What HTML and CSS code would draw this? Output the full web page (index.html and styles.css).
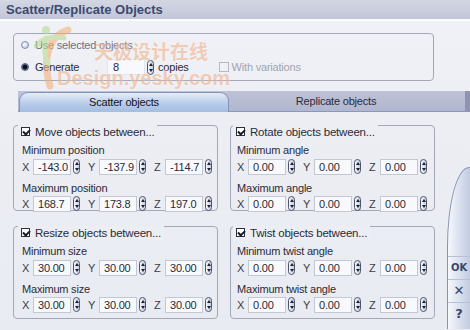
FILE: index.html
```html
<!DOCTYPE html>
<html lang="en">
<head>
    <meta charset="UTF-8">
    <title>Scatter/Replicate Objects</title>
    <link rel="stylesheet" href="styles.css">
</head>
<body>
    <div class="window">
        <div class="titlebar">Scatter/Replicate Objects</div>

        <div class="source">
            <div class="source-box">
                <div class="opt disabled">
                    <span class="radio"></span>Use selected objects
                </div>
                <div class="opt">
                    <span class="radio on"></span>
                    <span class="gen-label">Generate</span>
                    <span class="field count">8</span>
                    <span class="spin"></span>
                    <span class="copies">copies</span>
                    <span class="box-off"></span>
                    <span class="muted">With variations</span>
                </div>
            </div>
        </div>

        <!-- watermark from the source picture -->
        <div class="watermark">
            <svg class="wm-logo" width="50" height="70" viewBox="0 0 50 70">
                <path d="M34 6 C14 12 8 36 16 62" fill="none" stroke="#f3b27a" stroke-width="7" stroke-linecap="round"/>
                <circle cx="12" cy="6" r="4" fill="#b9dc8c"/>
                <path d="M2 22 C8 14 20 12 30 14 M12 14 C10 24 10 32 14 40" fill="none" stroke="#b9dc8c" stroke-width="5" stroke-linecap="round"/>
            </svg>
            <div class="wm-cn">天极设计在线</div>
            <div class="wm-en">Design.yesky.com</div>
        </div>

        <div class="tabs">
            <div class="tab active">Scatter objects</div>
            <div class="tab">Replicate objects</div>
        </div>

        <div class="main">
            <div class="groups">
                <div class="group">
                    <div class="group-title"><span class="tick"></span>Move objects between...</div>
                    <div class="row-label">Minimum position</div>
                    <div class="xyz">
                        <span class="axis">X</span><span class="field">-143.0</span><span class="spin"></span>
                        <span class="axis">Y</span><span class="field">-137.9</span><span class="spin"></span>
                        <span class="axis">Z</span><span class="field">-114.7</span><span class="spin"></span>
                    </div>
                    <div class="row-label">Maximum position</div>
                    <div class="xyz">
                        <span class="axis">X</span><span class="field">168.7</span><span class="spin"></span>
                        <span class="axis">Y</span><span class="field">173.8</span><span class="spin"></span>
                        <span class="axis">Z</span><span class="field">197.0</span><span class="spin"></span>
                    </div>
                </div>

                <div class="group right">
                    <div class="group-title"><span class="tick"></span>Rotate objects between...</div>
                    <div class="row-label">Minimum angle</div>
                    <div class="xyz">
                        <span class="axis">X</span><span class="field">0.00</span><span class="spin"></span>
                        <span class="axis">Y</span><span class="field">0.00</span><span class="spin"></span>
                        <span class="axis">Z</span><span class="field">0.00</span><span class="spin"></span>
                    </div>
                    <div class="row-label">Maximum angle</div>
                    <div class="xyz">
                        <span class="axis">X</span><span class="field">0.00</span><span class="spin"></span>
                        <span class="axis">Y</span><span class="field">0.00</span><span class="spin"></span>
                        <span class="axis">Z</span><span class="field">0.00</span><span class="spin"></span>
                    </div>
                </div>

                <div class="group">
                    <div class="group-title"><span class="tick"></span>Resize objects between...</div>
                    <div class="row-label">Minimum size</div>
                    <div class="xyz">
                        <span class="axis">X</span><span class="field">30.00</span><span class="spin"></span>
                        <span class="axis">Y</span><span class="field">30.00</span><span class="spin"></span>
                        <span class="axis">Z</span><span class="field">30.00</span><span class="spin"></span>
                    </div>
                    <div class="row-label">Maximum size</div>
                    <div class="xyz">
                        <span class="axis">X</span><span class="field">30.00</span><span class="spin"></span>
                        <span class="axis">Y</span><span class="field">30.00</span><span class="spin"></span>
                        <span class="axis">Z</span><span class="field">30.00</span><span class="spin"></span>
                    </div>
                </div>

                <div class="group right">
                    <div class="group-title"><span class="tick"></span>Twist objects between...</div>
                    <div class="row-label">Minimum twist angle</div>
                    <div class="xyz">
                        <span class="axis">X</span><span class="field">0.00</span><span class="spin"></span>
                        <span class="axis">Y</span><span class="field">0.00</span><span class="spin"></span>
                        <span class="axis">Z</span><span class="field">0.00</span><span class="spin"></span>
                    </div>
                    <div class="row-label">Maximum twist angle</div>
                    <div class="xyz">
                        <span class="axis">X</span><span class="field">0.00</span><span class="spin"></span>
                        <span class="axis">Y</span><span class="field">0.00</span><span class="spin"></span>
                        <span class="axis">Z</span><span class="field">0.00</span><span class="spin"></span>
                    </div>
                </div>
            </div>

            <div class="side">
                <div class="side-shape">
                    <div class="side-btn">OK</div>
                    <div class="side-btn big">&#x2715;</div>
                    <div class="side-btn big">?</div>
                </div>
            </div>
        </div>
    </div>
</body>
</html>
```

FILE: styles.css
```css
body {
    margin: 0;
    font-family: 'Liberation Sans', Arial, sans-serif;
    font-size: 11px;
    color: #2b2b36;
    background-color: #eceef4;
}

.window {
    position: relative;
    width: 470px;
    height: 330px;
    overflow: hidden;
    background: linear-gradient(#f1f2f7, #eceef4 40%, #e9ebf2);
}

.titlebar {
    height: 19px;
    line-height: 19px;
    padding-left: 6px;
    font-size: 13px;
    font-weight: bold;
    color: #3b4a6e;
    background: linear-gradient(#d3d6e3, #c2c6d9);
    border-bottom: 2px solid #fafbfd;
}

/* top source box */
.source {
    padding: 12px 0 10px 13px;
}

.source-box {
    width: 412px;
    height: 38px;
    padding: 4px 0 4px 7px;
    border: 1px solid #a3a7b8;
    border-radius: 4px;
}

.opt {
    display: flex;
    align-items: center;
    height: 14px;
    letter-spacing: -0.2px;
}

.opt + .opt {
    height: 18px;
    margin-top: 6px;
}

.opt.disabled {
    color: #6c7080;
}

.radio {
    width: 8px;
    height: 8px;
    margin-right: 6px;
    border-radius: 50%;
    border: 1px solid #7e90b6;
    background: radial-gradient(circle at 40% 40%, #ffffff, #a9bde0);
    box-sizing: border-box;
}

.radio.on {
    border-color: #4d5f86;
    background: radial-gradient(circle, #111 0 2px, #7d93c2 3px);
}

.gen-label {
    width: 72px;
}

.field {
    display: flex;
    align-items: center;
    width: 38px;
    height: 16px;
    padding-left: 4px;
    box-sizing: border-box;
    background-color: #f8f9fc;
    border: 1px solid #c4c8d5;
    color: #2a2a34;
}

.field.count {
    padding-left: 5px;
    border-color: #e3e5ec;
}

.spin {
    display: flex;
    flex-direction: column;
    justify-content: space-between;
    align-items: center;
    width: 7px;
    height: 15px;
    margin-left: 2px;
    padding: 2px 0;
    box-sizing: border-box;
    border: 1px solid #4e5569;
    border-radius: 4px;
    background: linear-gradient(90deg, #f5f7fc, #c6cde0);
}

.spin::before,
.spin::after {
    content: '';
    border-left: 2px solid transparent;
    border-right: 2px solid transparent;
}

.spin::before {
    border-bottom: 3px solid #1e2230;
}

.spin::after {
    border-top: 3px solid #1e2230;
}

.copies {
    margin-left: 4px;
}

.box-off {
    width: 10px;
    height: 10px;
    margin-left: 30px;
    margin-right: 3px;
    box-sizing: border-box;
    border: 1px solid #b5b9c6;
    background-color: #f0f1f5;
}

.muted {
    color: #a0a4b2;
}

/* watermark */
.watermark {
    position: absolute;
    left: 32px;
    top: 22px;
    width: 210px;
    height: 70px;
    opacity: 0.6;
    pointer-events: none;
}

.wm-logo {
    position: absolute;
    left: 2px;
    top: 2px;
}

.wm-cn {
    position: absolute;
    left: 62px;
    top: 17px;
    font-family: 'Noto Sans CJK SC', sans-serif;
    font-size: 19px;
    font-weight: bold;
    line-height: 23px;
    color: #f0b48c;
    text-shadow: 0 0 2px #fff;
}

.wm-en {
    position: absolute;
    left: 25px;
    top: 44px;
    font-size: 20px;
    font-weight: bold;
    line-height: 24px;
    color: #f0b48c;
    text-shadow: 0 0 2px #fff;
}

/* tabs */
.tabs {
    display: flex;
    height: 20px;
    margin-left: 18px;
    background: linear-gradient(#bec2d7, #b2b7cf);
    border-right: 5px solid #8d93b1;
    border-bottom: 1px solid #7f9bcb;
}

.tab {
    width: 214px;
    line-height: 20px;
    text-align: center;
    letter-spacing: -0.2px;
    color: #2a2c3c;
}

.tab.active {
    width: 208px;
    height: 19px;
    margin: 1px 0 0 1px;
    line-height: 19px;
    background: linear-gradient(#e6edf8, #b8cce9 55%, #a4bde2);
    border: 1px solid #8393ba;
    border-bottom: none;
    border-radius: 9px 9px 0 0;
    color: #121218;
}

/* lower area */
.main {
    display: flex;
    height: 217px;
}

.groups {
    display: grid;
    grid-template-columns: 205px 205px;
    grid-template-rows: 86px 93px;
    column-gap: 12px;
    row-gap: 15px;
    padding: 13px 0 0 13px;
}

.group {
    padding-left: 8px;
    border: 1px solid #a3a7b8;
    border-radius: 4px;
    letter-spacing: -0.2px;
}

.group.right {
    padding-left: 6px;
}

.group-title {
    display: inline-flex;
    align-items: center;
    height: 14px;
    margin: -8px 0 0 -4px;
    padding: 0 3px;
    background-color: #eceef4;
    font-size: 11.5px;
}

.tick {
    width: 9px;
    height: 9px;
    margin-right: 5px;
    box-sizing: border-box;
    border: 1px solid #2c2f3c;
    background: #fff;
}

.tick::after {
    content: '';
    display: block;
    width: 3px;
    height: 5px;
    margin: 0 0 0 2px;
    border-right: 2px solid #1a1d28;
    border-bottom: 2px solid #1a1d28;
    transform: rotate(45deg);
}

.row-label {
    height: 14px;
    line-height: 14px;
    margin-top: 4px;
}

.xyz + .row-label {
    margin-top: 6px;
}

.xyz {
    display: flex;
    align-items: center;
    height: 16px;
    margin-top: 2px;
}

.xyz + .row-label + .xyz {
    margin-top: 1px;
}

.axis {
    width: 7px;
    margin-right: 4px;
    color: #3a3c48;
}

.xyz .spin + .axis {
    margin-left: 8px;
}

/* right button strip */
.side {
    display: flex;
    flex: 1;
    padding-left: 12px;
}

.side-shape {
    display: flex;
    flex-direction: column;
    justify-content: flex-end;
    flex: 1;
    margin-top: 55px;
    padding-bottom: 4px;
    border-left: 1px solid #8a92b2;
    border-top: 1px solid #8a92b2;
    border-top-left-radius: 22px 80px;
    background: linear-gradient(90deg, #f6f8fc, #d5dcec 60%, #c3cbe0);
}

.side-btn {
    height: 22px;
    line-height: 22px;
    text-align: center;
    font-family: 'DejaVu Sans', sans-serif;
    font-size: 10px;
    font-weight: bold;
    color: #3a4668;
    border-top: 1px solid #b8c0d8;
}

.side-btn.big {
    font-size: 13px;
}
```
